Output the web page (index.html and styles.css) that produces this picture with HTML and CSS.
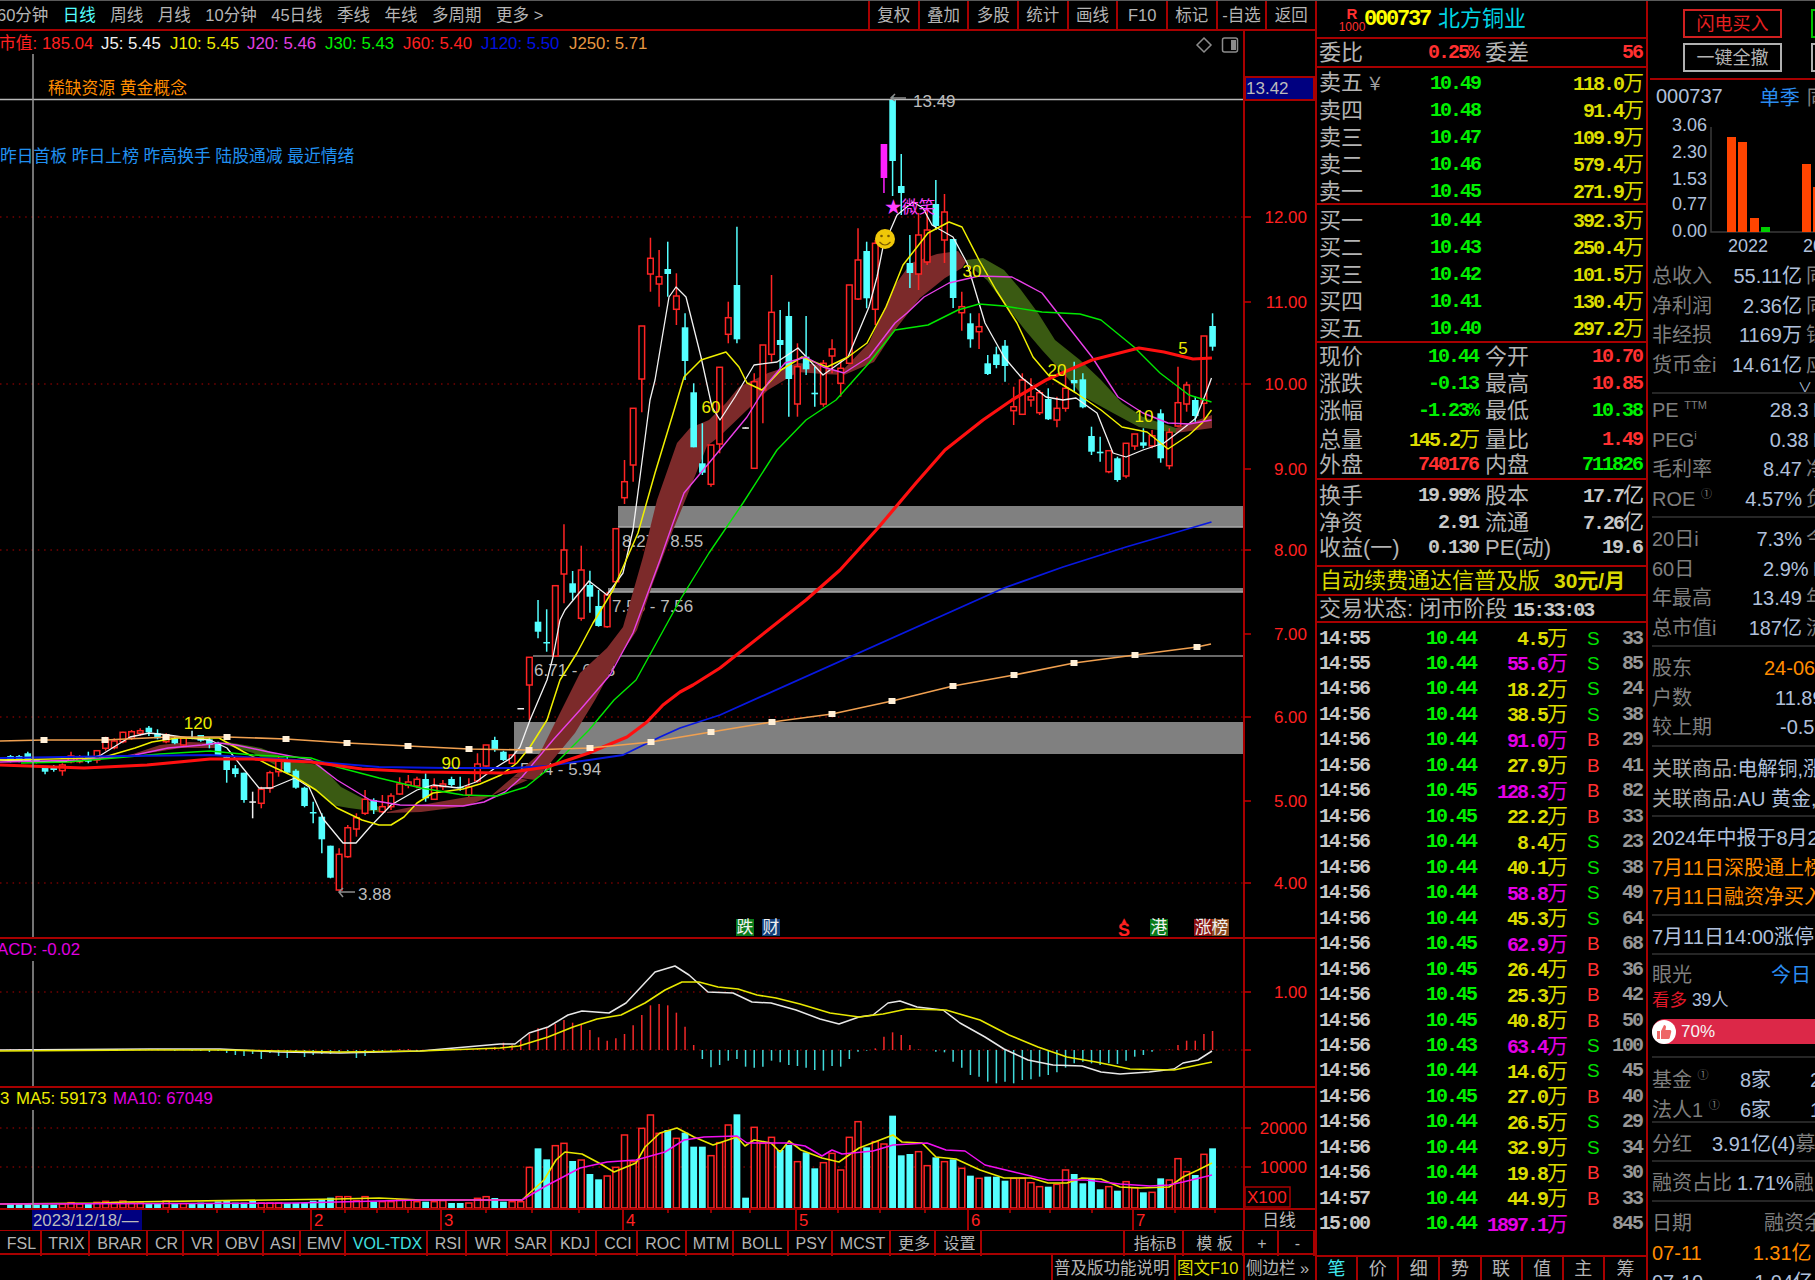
FILE: index.html
```html
<!DOCTYPE html>
<html lang="zh-CN">
<head>
<meta charset="utf-8">
<title>北方铜业 000737</title>
<link rel="stylesheet" href="styles.css">
</head>
<body>
<div class="app">
  <section class="left">
    <header class="topbar">
      <nav class="periods">
        <span>60分钟</span><span class="on">日线</span><span>周线</span><span>月线</span><span>10分钟</span><span>45日线</span><span>季线</span><span>年线</span><span>多周期</span><span>更多 &gt;</span>
      </nav>
      <nav class="tools">
        <span>复权</span><span>叠加</span><span>多股</span><span>统计</span><span>画线</span><span>F10</span><span>标记</span><span>-自选</span><span>返回</span>
      </nav>
    </header>
    <svg id="chart" class="chart" viewBox="0 31 1315 1200" width="1315" height="1200"></svg>
    <nav class="indicators">
      <span>FSL</span><span>TRIX</span><span>BRAR</span><span>CR</span><span>VR</span><span>OBV</span><span>ASI</span><span>EMV</span><span class="on">VOL-TDX</span><span>RSI</span><span>WR</span><span>SAR</span><span>KDJ</span><span>CCI</span><span>ROC</span><span>MTM</span><span>BOLL</span><span>PSY</span><span>MCST</span><span>更多</span><span>设置</span><span></span><span>指标B</span><span>模 板</span><span>+</span><span>-</span>
    </nav>
    <footer class="status">
      <span>普及版功能说明</span><span class="yel">图文F10</span><span>侧边栏 »</span>
    </footer>
  </section>

  <section class="quote">
    <div class="qhead">
      <span class="rank"><b>R</b><i>1000</i></span>
      <span class="code num">000737</span>
      <span class="name">北方铜业</span>
    </div>
    <div class="qblock qb-ratio">
      <div class="q4"><span>委比</span><span class="num red">0.25%</span><span>委差</span><span class="num red">56</span></div>
    </div>
    <div class="qblock">
      <div class="q3"><span>卖五<small>￥</small></span><span class="num grn">10.49</span><span class="num yel">118.0<em>万</em></span></div>
      <div class="q3"><span>卖四</span><span class="num grn">10.48</span><span class="num yel">91.4<em>万</em></span></div>
      <div class="q3"><span>卖三</span><span class="num grn">10.47</span><span class="num yel">109.9<em>万</em></span></div>
      <div class="q3"><span>卖二</span><span class="num grn">10.46</span><span class="num yel">579.4<em>万</em></span></div>
      <div class="q3"><span>卖一</span><span class="num grn">10.45</span><span class="num yel">271.9<em>万</em></span></div>
    </div>
    <div class="qblock qb-buy">
      <div class="q3"><span>买一</span><span class="num grn">10.44</span><span class="num yel">392.3<em>万</em></span></div>
      <div class="q3"><span>买二</span><span class="num grn">10.43</span><span class="num yel">250.4<em>万</em></span></div>
      <div class="q3"><span>买三</span><span class="num grn">10.42</span><span class="num yel">101.5<em>万</em></span></div>
      <div class="q3"><span>买四</span><span class="num grn">10.41</span><span class="num yel">130.4<em>万</em></span></div>
      <div class="q3"><span>买五</span><span class="num grn">10.40</span><span class="num yel">297.2<em>万</em></span></div>
    </div>
    <div class="qblock">
      <div class="q4"><span>现价</span><span class="num grn">10.44</span><span>今开</span><span class="num red">10.70</span></div>
      <div class="q4"><span>涨跌</span><span class="num grn">-0.13</span><span>最高</span><span class="num red">10.85</span></div>
      <div class="q4"><span>涨幅</span><span class="num grn">-1.23%</span><span>最低</span><span class="num grn">10.38</span></div>
      <div class="q4"><span>总量</span><span class="num yel">145.2<em>万</em></span><span>量比</span><span class="num red">1.49</span></div>
      <div class="q4"><span>外盘</span><span class="num red">740176</span><span>内盘</span><span class="num grn">711826</span></div>
    </div>
    <div class="qblock qb-share">
      <div class="q4"><span>换手</span><span class="num wht">19.99%</span><span>股本</span><span class="num wht">17.7<em>亿</em></span></div>
      <div class="q4"><span>净资</span><span class="num wht">2.91</span><span>流通</span><span class="num wht">7.26<em>亿</em></span></div>
      <div class="q4"><span>收益(一)</span><span class="num wht">0.130</span><span>PE(动)</span><span class="num wht">19.6</span></div>
    </div>
    <div class="qblock qad">自动续费通达信普及版<b>30元/月</b></div>
    <div class="qblock qstate">交易状态: 闭市阶段 <span class="num wht">15:33:03</span></div>
    <div class="trades">
      <div class="tr"><span class="num">14:55</span><span class="num grn">10.44</span><span class="num yel">4.5<em>万</em></span><span class="s">S</span><span class="num n">33</span></div>
      <div class="tr"><span class="num">14:55</span><span class="num grn">10.44</span><span class="num mag">55.6<em>万</em></span><span class="s">S</span><span class="num n">85</span></div>
      <div class="tr"><span class="num">14:56</span><span class="num grn">10.44</span><span class="num yel">18.2<em>万</em></span><span class="s">S</span><span class="num n">24</span></div>
      <div class="tr"><span class="num">14:56</span><span class="num grn">10.44</span><span class="num yel">38.5<em>万</em></span><span class="s">S</span><span class="num n">38</span></div>
      <div class="tr"><span class="num">14:56</span><span class="num grn">10.44</span><span class="num mag">91.0<em>万</em></span><span class="b">B</span><span class="num n">29</span></div>
      <div class="tr"><span class="num">14:56</span><span class="num grn">10.44</span><span class="num yel">27.9<em>万</em></span><span class="b">B</span><span class="num n">41</span></div>
      <div class="tr"><span class="num">14:56</span><span class="num grn">10.45</span><span class="num mag">128.3<em>万</em></span><span class="b">B</span><span class="num n">82</span></div>
      <div class="tr"><span class="num">14:56</span><span class="num grn">10.45</span><span class="num yel">22.2<em>万</em></span><span class="b">B</span><span class="num n">33</span></div>
      <div class="tr"><span class="num">14:56</span><span class="num grn">10.44</span><span class="num yel">8.4<em>万</em></span><span class="s">S</span><span class="num n">23</span></div>
      <div class="tr"><span class="num">14:56</span><span class="num grn">10.44</span><span class="num yel">40.1<em>万</em></span><span class="s">S</span><span class="num n">38</span></div>
      <div class="tr"><span class="num">14:56</span><span class="num grn">10.44</span><span class="num mag">58.8<em>万</em></span><span class="s">S</span><span class="num n">49</span></div>
      <div class="tr"><span class="num">14:56</span><span class="num grn">10.44</span><span class="num yel">45.3<em>万</em></span><span class="s">S</span><span class="num n">64</span></div>
      <div class="tr"><span class="num">14:56</span><span class="num grn">10.45</span><span class="num mag">62.9<em>万</em></span><span class="b">B</span><span class="num n">68</span></div>
      <div class="tr"><span class="num">14:56</span><span class="num grn">10.45</span><span class="num yel">26.4<em>万</em></span><span class="b">B</span><span class="num n">36</span></div>
      <div class="tr"><span class="num">14:56</span><span class="num grn">10.45</span><span class="num yel">25.3<em>万</em></span><span class="b">B</span><span class="num n">42</span></div>
      <div class="tr"><span class="num">14:56</span><span class="num grn">10.45</span><span class="num yel">40.8<em>万</em></span><span class="b">B</span><span class="num n">50</span></div>
      <div class="tr"><span class="num">14:56</span><span class="num grn">10.43</span><span class="num mag">63.4<em>万</em></span><span class="s">S</span><span class="num n">100</span></div>
      <div class="tr"><span class="num">14:56</span><span class="num grn">10.44</span><span class="num yel">14.6<em>万</em></span><span class="s">S</span><span class="num n">45</span></div>
      <div class="tr"><span class="num">14:56</span><span class="num grn">10.45</span><span class="num yel">27.0<em>万</em></span><span class="b">B</span><span class="num n">40</span></div>
      <div class="tr"><span class="num">14:56</span><span class="num grn">10.44</span><span class="num yel">26.5<em>万</em></span><span class="s">S</span><span class="num n">29</span></div>
      <div class="tr"><span class="num">14:56</span><span class="num grn">10.44</span><span class="num yel">32.9<em>万</em></span><span class="s">S</span><span class="num n">34</span></div>
      <div class="tr"><span class="num">14:56</span><span class="num grn">10.44</span><span class="num yel">19.8<em>万</em></span><span class="b">B</span><span class="num n">30</span></div>
      <div class="tr"><span class="num">14:57</span><span class="num grn">10.44</span><span class="num yel">44.9<em>万</em></span><span class="b">B</span><span class="num n">33</span></div>
      <div class="tr"><span class="num">15:00</span><span class="num grn">10.44</span><span class="num mag">1897.1<em>万</em></span><span></span><span class="num n">845</span></div>
    </div>
    <nav class="qtabs">
      <span class="on">笔</span><span>价</span><span>细</span><span>势</span><span>联</span><span>值</span><span>主</span><span>筹</span>
    </nav>
  </section>

  <aside class="side">
    <div class="actions">
      <div class="btns">
        <span class="btn buy">闪电买入</span>
        <span class="btn all">一键全撤</span>
      </div>
      <div class="btns">
        <span class="btn sell">闪电卖出</span>
        <span class="btn all">条件单</span>
      </div>
    </div>
    <div class="shead"><span class="v">000737</span><span class="blue">单季</span><span class="l">同</span></div>
    <svg class="mini" viewBox="0 0 167 148" width="167" height="148">
      <path class="mini-axis" d="M63 15V120H167"/>
      <text class="mini-t" x="59" y="19" text-anchor="end">3.06</text>
      <text class="mini-t" x="59" y="46" text-anchor="end">2.30</text>
      <text class="mini-t" x="59" y="73" text-anchor="end">1.53</text>
      <text class="mini-t" x="59" y="98" text-anchor="end">0.77</text>
      <text class="mini-t" x="59" y="125" text-anchor="end">0.00</text>
      <rect class="mini-o" x="79" y="25" width="9" height="95"/>
      <rect class="mini-o" x="90" y="30" width="9" height="90"/>
      <rect class="mini-o" x="102" y="106" width="9" height="14"/>
      <rect class="mini-g" x="113" y="115" width="9" height="5"/>
      <rect class="mini-o" x="154" y="52" width="9" height="68"/>
      <rect class="mini-o" x="165" y="75" width="9" height="45"/>
      <text class="mini-t" x="80" y="140">2022</text>
      <text class="mini-t" x="155" y="140">2023</text>
    </svg>
    <div class="sec s1">
      <div class="row"><span class="l">总收入</span><span class="v">55.11亿</span><span class="l x">同</span></div>
      <div class="row"><span class="l">净利润</span><span class="v">2.36亿</span><span class="l x">同</span></div>
      <div class="row"><span class="l">非经损</span><span class="v">1169万</span><span class="l x">钱</span></div>
      <div class="row"><span class="l">货币金i</span><span class="v">14.61亿</span><span class="l x">应</span></div>
      <div class="chev">∨</div>
    </div>
    <div class="sec s2">
      <div class="row"><span class="l">PE <sup>TTM</sup></span><span class="v">28.3</span><span class="l x">P</span></div>
      <div class="row"><span class="l">PEG<sup>i</sup></span><span class="v">0.38</span><span class="l x">P</span></div>
      <div class="row"><span class="l">毛利率</span><span class="v">8.47</span><span class="l x">净</span></div>
      <div class="row"><span class="l">ROE <sup>①</sup></span><span class="v">4.57%</span><span class="l x">负</span></div>
    </div>
    <div class="sec s3">
      <div class="row"><span class="l">20日i</span><span class="v">7.3%</span><span class="l x">今</span></div>
      <div class="row"><span class="l">60日</span><span class="v">2.9%</span><span class="l x">B</span></div>
      <div class="row"><span class="l">年最高</span><span class="v">13.49</span><span class="l x">年</span></div>
      <div class="row"><span class="l">总市值i</span><span class="v">187亿</span><span class="l x">流</span></div>
    </div>
    <div class="sec s4">
      <div class="row free"><span class="l">股东</span><span class="org w1">24-06-30</span></div>
      <div class="row free"><span class="l">户数</span><span class="vv w2">11.89万</span></div>
      <div class="row free"><span class="l">较上期</span><span class="vv w3">-0.55%</span></div>
    </div>
    <div class="sec s5">
      <div class="line g">关联商品:<span class="vv">电解铜,涨价</span></div>
      <div class="line g">关联商品:<span class="vv">AU 黄金,</span></div>
    </div>
    <div class="sec s6">
      <div class="line vv">2024年中报于8月23日</div>
      <div class="line org">7月11日深股通上榜</div>
      <div class="line org">7月11日融资净买入</div>
    </div>
    <div class="sec s7">
      <div class="line vv">7月11日14:00涨停</div>
    </div>
    <div class="sec s8">
      <div class="row free short"><span class="l">眼光</span><span class="blue today">今日</span></div>
      <div class="bull"><span class="red2">看多</span> <span class="vv">39人</span></div>
      <div class="pct">
        <svg class="thumb" viewBox="0 0 24 24" width="24" height="24"><circle cx="12" cy="12" r="12" fill="#fff"/><path fill="#e66" d="M5 11h3v8H5zM9 11l3-6c1.500 0 2 1 2 2l-.500 3H18c1 0 1.500 1 1.200 2l-1.500 6c-.2.700-.7 1-1.400 1H9z"/></svg>
        <span>70%</span>
      </div>
    </div>
    <div class="sec s9">
      <div class="inst"><span class="l">基金 <sup>①</sup></span><span class="vv">8家</span><span class="vv">2.3%</span></div>
      <div class="inst"><span class="l">法人1 <sup>①</sup></span><span class="vv">6家</span><span class="vv">1.2%</span></div>
    </div>
    <div class="sec s10">
      <div class="row free"><span class="l">分红</span><span class="vv mid">3.91亿(4)</span><span class="l">募</span></div>
    </div>
    <div class="sec s11">
      <div class="row free"><span class="l">融资占比</span><span class="vv mid2">1.71%</span><span class="l">融</span></div>
    </div>
    <div class="sec s12">
      <div class="row free"><span class="l">日期</span><span class="l rz">融资余额</span></div>
      <div class="row free dt"><span class="org">07-11</span><span class="org rz2">1.31亿</span></div>
      <div class="row free dt"><span class="vv">07-10</span><span class="vv rz2">1.04亿</span></div>
    </div>
  </aside>
</div>
<script src="chart.js"></script>
</body>
</html>
```

FILE: styles.css
```css
* { box-sizing: border-box; }
html, body { margin: 0; padding: 0; background: #000; overflow: hidden; }
body { font-family: "Liberation Sans", "Noto Sans CJK SC", sans-serif; color: #b4b4b4; }
.app { display: grid; grid-template-columns: 1315px 333px 167px; width: 1815px; height: 1280px; overflow: hidden; border-top: 1px solid #5a5a5a; }
em, i { font-style: normal; }

/* left column */
.left { display: flex; flex-direction: column; min-width: 0; }
.topbar { height: 30px; display: flex; justify-content: space-between; border-bottom: 2px solid #a80000; font-size: 16.500px; color: #b4b4b4; }
.periods { display: flex; gap: 14.500px; margin-left: -3px; line-height: 29px; }
.periods .on { color: #54ffff; }
.tools { display: flex; width: 447px; line-height: 29px; }
.tools span { flex: 1; text-align: center; border-left: 2px solid #a80000; }
.chart { display: block; flex: none; background: #000; }
.indicators { height: 24px; display: grid; grid-template-columns: 42px 48px 58px 36px 35px 45px 37px 45px 82px 39px 41px 44px 45px 41px 49px 47px 55px 44px 58px 45px 46px 143px 59px 60px 35px 36px; border-bottom: 2px solid #a80000; font-size: 16px; line-height: 25px; text-align: center; }
.indicators span { border-right: 2px solid #a80000; padding-left: 3px; white-space: nowrap; }
.indicators .on { color: #40e0e0; }
.status { height: 25px; display: flex; justify-content: flex-end; font-size: 16.500px; line-height: 27px; }
.status span { padding: 0 1px; border-left: 2px solid #a80000; white-space: nowrap; }
.status span:nth-child(1) { width: 123px; }
.status span:nth-child(2) { width: 69px; }
.status span:nth-child(3) { width: 72px; }

/* quote column */
.quote { border-left: 2px solid #a80000; border-right: 2px solid #a80000; display: flex; flex-direction: column; font-size: 22px; min-width: 0; }
.num { font-family: "Liberation Mono", monospace; font-weight: 700; font-size: 20px; letter-spacing: -2px; }
.num em { font-family: "Noto Sans CJK SC", sans-serif; font-weight: 400; font-size: 21px; letter-spacing: 0; }
.red { color: #ff3030; }
.grn { color: #00f000; }
.yel { color: #dcdc00; }
.mag { color: #e400e4; }
.wht { color: #c8c8c8; }
.qhead { height: 38px; flex: none; display: flex; align-items: center; border-bottom: 2px solid #a80000; padding-left: 23px; }
.rank { width: 24px; display: flex; flex-direction: column; align-items: center; color: #ff3030; line-height: 12px; font-size: 12px; }
.rank b { font-size: 15px; line-height: 15px; }
.code { color: #ffff00; width: 74px; font-size: 22px; letter-spacing: -2.200px; }
.name { color: #00d4e4; font-size: 22px; line-height: 1; }
.qblock { border-bottom: 2px solid #a80000; flex: none; }
.qb-ratio { height: 29px; }
.qb-buy { height: 138px; }
.qb-share { height: 87px; }
.q3, .q4 { display: grid; height: 27px; align-items: center; padding: 0 2px; line-height: 27px; white-space: nowrap; }
.q3 { grid-template-columns: 100px 61px 1fr; }
.q4 { grid-template-columns: 70px 96px 60px 1fr; }
.q3 small { color: #a0a0a0; font-size: 18px; margin-left: 3px; }
.q3 span:nth-child(2), .q3 span:nth-child(3), .q4 span:nth-child(2), .q4 span:nth-child(4) { text-align: right; }
.q4 .num:nth-child(2) { padding-right: 7px; }
.q4 .num:nth-child(2):has(em) { padding-right: 5px; }
.q4 .num:nth-child(4) { padding-right: 2px; }
.q4 .num:nth-child(4):has(em) { padding-right: 0; }
.qad { height: 29px; color: #d8d800; line-height: 28px; padding-left: 3px; white-space: nowrap; }
.qad b { margin-left: 14px; font-size: 21px; }
.qstate { height: 27px; line-height: 26px; padding-left: 2px; white-space: nowrap; }
.trades { flex: 1; min-height: 0; padding-top: 1px; }
.tr { display: grid; grid-template-columns: 60px 97px 92px 40px 1fr; height: 25.470px; line-height: 25px; padding: 0 2px; align-items: center; white-space: nowrap; }
.tr span { color: #c8c8c8; }
.tr .grn { color: #00f000; }
.tr .yel { color: #dcdc00; }
.tr .mag { color: #e400e4; }
.tr span:nth-child(2), .tr span:nth-child(3), .tr span:nth-child(5) { text-align: right; }
.tr .n { color: #969696; padding-right: 2px; }
.tr .s, .tr .b { padding-left: 19px; font-size: 19px; }
.tr .s { color: #00e000; }
.tr .b { color: #ff3030; }
.qtabs { height: 25px; flex: none; display: grid; grid-template-columns: repeat(8, 1fr); border-top: 2px solid #a80000; font-size: 18px; line-height: 24px; text-align: center; }
.qtabs span { border-right: 2px solid #a80000; }
.qtabs span:last-child { border-right: 0; }
.qtabs .on { color: #40e8f0; }

/* side column */
.side { font-size: 20px; overflow: hidden; min-width: 0; white-space: nowrap; padding-left: 4px; }
.v, .vv { color: #b0c0dc; }
.l { color: #7e7e7e; }
.org { color: #ff8c00; }
.blue { color: #2a8cf0; }
.red2 { color: #e01828; }
.actions { display: flex; gap: 29px; height: 79px; border-bottom: 2px solid #a80000; padding: 8px 0 0 33px; margin-left: -2px; width: 190px; }
.btns { display: flex; flex-direction: column; gap: 5px; flex: none; width: 99px; }
.btn { height: 29px; border: 2px solid #b0b0b0; text-align: center; font-size: 18px; line-height: 27px; }
.btn.buy { border-color: #d02020; color: #e82020; }
.btn.sell { border-color: #00c000; color: #00d000; }
.shead { display: flex; align-items: center; height: 32px; padding-left: 4px; }
.shead .blue { margin-left: 37px; }
.shead .l { margin-left: 7px; }
.mini { display: block; margin: 0 0 2px -4px; }
.mini-axis { fill: none; stroke: #3a3a3a; stroke-width: 1.500; }
.mini-t { font-size: 18px; fill: #b0c0dc; }
.mini-o { fill: #ff4400; }
.mini-g { fill: #00d000; }

.sec { border-bottom: 2px solid #262626; overflow: hidden; }
.s1 { height: 132px; }
.s2 { height: 124px; padding-top: 2px; }
.s3 { height: 129px; padding-top: 7px; }
.s4 { height: 100px; padding-top: 7px; }
.s5 { height: 70px; padding-top: 8px; }
.s6 { height: 99px; padding-top: 7px; }
.s7 { height: 39px; padding-top: 7px; }
.s8 { height: 103px; padding-top: 6px; }
.s9 { height: 65px; padding-top: 8px; }
.s10 { height: 39px; padding-top: 7px; }
.s11 { height: 40px; padding-top: 7px; }
.s12 { border-bottom: 0; padding-top: 7px; }
.row { display: flex; flex: none; height: 29.600px; line-height: 29px; width: 174px; }
.row > .v { margin-left: auto; }
.x { margin-left: 4px; flex: none; }
.free { width: auto; }
sup { font-size: 11px; vertical-align: 8px; line-height: 0; }
.w1 { margin-left: 72px; }
.w2 { margin-left: 83px; }
.w3 { margin-left: 68px; }
.chev { height: 15px; line-height: 14px; font-size: 14px; color: #b0c0dc; text-align: right; padding-right: 3px; }
.line { height: 29.600px; line-height: 29px; }
.g { color: #a8a8a8; }
.short { height: 26px; }
.today { margin-left: 79px; }
.bull { height: 26px; font-size: 17.500px; line-height: 26px; }
.pct { width: 190px; height: 25px; margin-top: 6px; background: #dc2848; border-radius: 13px; display: flex; align-items: center; color: #f4f4f4; font-size: 17px; gap: 5px; }
.thumb { display: block; flex: none; }
.inst { display: grid; grid-template-columns: 88px 70px 1fr; height: 29.600px; line-height: 29px; width: 200px; }
.mid { margin-left: 20px; }
.mid2 { margin-left: 5px; }
.rz { margin-left: 72px; }
.rz2 { margin-left: 51px; }
.dt { height: 29px; }

/* chart svg */
.gridline { stroke: #b00000; stroke-width: 1.200; stroke-dasharray: 1.500 4.800; }
.rule { stroke: #a80000; stroke-width: 2; fill: none; }
.tick { stroke: #c00000; stroke-width: 1.500; }
.cross { stroke: #9a9a9a; stroke-width: 1.500; }
.band { fill: #808080; }
.band-edge { stroke: #a8a8a8; stroke-width: 1.500; }
.band-line { stroke: #8c8c8c; stroke-width: 1.500; }
.hair { stroke: #b8b8b8; stroke-width: 1.500; }
.rb { fill: #7c2a2a; }
.rg { fill: #3a5a12; }
.bd-r { fill: #000; stroke: #ff2424; stroke-width: 1.500; }
.bd-c { fill: #54ffff; }
.bd-m { fill: #ff20ff; }
.bd-w { fill: #f0f0f0; }
.wk-r { stroke: #ff2424; stroke-width: 1.500; }
.wk-c { stroke: #54ffff; stroke-width: 1.500; }
.wk-m { stroke: #ff20ff; stroke-width: 1.500; }
.wk-w { stroke: #f0f0f0; stroke-width: 1.500; }
.ml { fill: none; stroke-linejoin: round; }
.ml-w { stroke: #f2f2f2; stroke-width: 1.300; }
.ml-y { stroke: #f0f000; stroke-width: 1.500; }
.ml-m { stroke: #e840e8; stroke-width: 1.400; }
.ml-g { stroke: #00e800; stroke-width: 1.400; }
.ml-r { stroke: #ff1010; stroke-width: 3.200; }
.ml-b { stroke: #0818e0; stroke-width: 1.800; }
.ml-o { stroke: #f0a050; stroke-width: 1.600; }
.ml-my { stroke: #e8e800; stroke-width: 1.600; }
.ml-mw { stroke: #e8e8e8; stroke-width: 1.500; }
.ml-vm { stroke: #f010f0; stroke-width: 1.500; }
.sq { fill: #fff0d8; }
.hist-r { stroke: #f02828; stroke-width: 1.500; }
.hist-c { stroke: #40d8d8; stroke-width: 1.500; }
.t { font-family: "Liberation Sans", "Noto Sans CJK SC", sans-serif; font-size: 16.800px; }
.t-lg { font-size: 17px; }
.t-sm { font-size: 8px; }
.t-b { font-weight: 700; font-size: 18px; }
.f-gray { fill: #bcbcbc; }
.f-red { fill: #ff2020; }
.f-wht { fill: #f0f0f0; }
.f-yel { fill: #ecec00; }
.f-mag { fill: #e040e0; }
.f-mac { fill: #e000e0; }
.f-grn { fill: #00f000; }
.f-blu { fill: #0010e0; }
.f-org { fill: #ff8c00; }
.f-o2 { fill: #e89840; }
.f-sky { fill: #2090f0; }
.f-star { fill: #ff40ff; }
.box-navy { fill: #000080; }
.box-price { fill: #000080; stroke: #a80000; stroke-width: 2; }
.tag-g { fill: #0a7a1a; }
.tag-b { fill: #0f3c78; }
.tag-r { fill: #8a1010; }
.tag-o { fill: #8a4a20; }
.ico { fill: none; stroke: #8c8c8c; stroke-width: 1.500; }
.ico-f { fill: #8c8c8c; }
.smile { fill: #f0c808; }
.smile-l { fill: none; stroke: #7a5a00; stroke-width: 1.200; }
.smile-e { fill: #7a5a00; }
.axis-box { fill: none; stroke: #a80000; stroke-width: 1.500; }
```

FILE: chart.js
```js
(function () {
  var out = [];
  function X(j) { return 10.5 + 8.648 * j; }
  function line(x1, y1, x2, y2, c) { out.push('<line class="' + c + '" x1="' + x1 + '" y1="' + y1 + '" x2="' + x2 + '" y2="' + y2 + '"/>'); }
  function rect(x, y, w, h, c) { out.push('<rect class="' + c + '" x="' + x + '" y="' + y + '" width="' + w + '" height="' + h + '"/>'); }
  function txt(x, y, s, c, a) { out.push('<text class="t ' + c + '" x="' + x + '" y="' + y + '"' + (a ? ' text-anchor="' + a + '"' : '') + '>' + s + '</text>'); }
  function poly(p, c) { out.push('<polyline class="ml ' + c + '" points="' + p + '"/>'); }
  function area(p, c) { out.push('<polygon class="' + c + '" points="' + p + '"/>'); }

  /* panel grid */
  [217, 384, 550, 717, 883, 992, 1050, 1128, 1167].forEach(function (y) { line(0, y, 1244, y, 'gridline'); });

  /* support/resistance bands */
  rect(618, 506, 626, 21, 'band'); line(618, 527, 1244, 527, 'band-edge');
  rect(608, 588, 636, 4, 'band'); line(608, 592, 1244, 592, 'band-edge');
  line(533, 656, 1244, 656, 'band-line');
  rect(514, 722, 730, 32, 'band');
  line(0, 99.5, 1244, 99.5, 'hair');

  txt(622, 547, '8.27 - 8.55', 't-lg f-gray');
  txt(612, 612, '7.55 - 7.56', 't-lg f-gray');
  txt(534, 676, '6.71 - 6.93', 't-lg f-gray');
  txt(520, 775, '5.94 - 5.94', 't-lg f-gray');

  /* MA ribbon */
  area('130,755 160,745 189,742 215,743 215,748 181,748 156,752', 'rb');
  area('227,742 261,748 295,762 320,765 341,787 362,798 379,807 379,812 349,808 332,805 311,787 290,773 253,753 219,743', 'rg');
  area('387,812 421,805 467,797 492,795 513,777 528,780 467,806 421,812 387,813', 'rb');
  area('513,777 540,753 563,707 580,673 607,648 623,627 643,557 657,500 677,443 690,428 709,420 726,403 739,387 768,373 798,363 823,365 840,373 869,343 895,285 911,263 937,254 958,251 966,262 962,268 945,278 920,298 895,330 874,362 844,375 823,374 798,372 768,390 747,410 720,436 707,446 687,496 673,530 653,583 637,630 624,650 613,667 595,700 575,733 547,767 535,780', 'rb');
  area('966,260 983,258 1004,270 1021,290 1038,313 1055,340 1080,360 1101,380 1122,403 1143,417 1176,428 1176,433 1139,427 1113,413 1084,397 1063,373 1042,350 1025,330 1004,303 987,280 966,263', 'rg');
  area('1176,428 1212,415 1212,428 1176,433', 'rb');

  /* candles: [type, wickTop, bodyTop, bodyBottom, wickBottom], y given in zoomed px */
  var segs = [
    [0, 680, [
      ['c',225,228,245,247],['c',225,228,245,247],['c',215,220,245,247],['c',238,240,248,250],['c',262,262,275,283],['c',255,262,270,275],['r',250,255,272,287],['r',215,228,245,250],['r',225,232,245,250],['c',215,232,245,250],
      ['r',212,212,240,250],['r',170,175,205,212],['r',175,183,203,208],['r',155,157,185,190],['r',150,155,175,180],['r',145,152,160,167],['c',138,143,157,168],['c',148,160,175,178],['r',160,165,185,190],['c',170,175,190,193],
      ['r',170,175,195,200],['c',152,172,176,178],['c',165,165,182,185],['c',172,178,195,205],['c',185,190,225,228],['c',225,230,270,308],['c',255,265,282,292],['c',278,278,360,368],['w',335,364,367,415],['r',320,328,370,385],
      ['r',272,278,325,338],['r',228,238,275,290],['c',228,245,278,282],['c',268,272,323,326],['c',320,323,378,382],['c',365,396,399,430],['c',400,410,478,520],['c',497,497,593,595],['r',505,523,630,632],['r',435,443,530,533],
      ['r',400,413,447,470],['r',330,358,400,405],['c',355,360,390,402],['r',345,380,395,400],['r',340,348,380,390],['r',292,312,342,345],['r',285,306,316,325],['r',290,298,318,325],['c',280,297,355,365],['r',295,320,358,360],
      ['r',300,312,320,330],['c',290,297,315,320],['c',290,320,323,332],['r',295,320,345,350],['r',220,252,303,308],['r',195,195,258,260],['c',170,180,210,215],['c',212,215,240,243],['r',225,225,250,252],['w',84,84,87,87]
    ]],
    [60, 400, [
      ['r',772,772,855,960],['c',600,665,695,715],['c',628,726,730,755],['r',557,557,768,768],['r',373,450,522,610],['c',513,550,578,600],['r',437,510,655,662],['c',512,555,590,638],['c',570,618,678,680],['r',575,585,680,683],['r',386,386,545,545]
    ]],
    [71, 200, [
      ['r',780,845,893,912],['r',625,625,795,845],['r',378,378,537,637],['r',113,175,222,275],['r',150,230,252,320],['c',125,207,222,290],['r',220,288,328,375],['c',340,382,483,540],['c',550,577,742,742],['c',670,790,818,825],
      ['r',735,735,853,860],['r',502,502,732,760],['r',305,353,403,430],['c',80,255,418,430],['w',682,682,685,685],['r',520,545,805,805],['r',435,435,570,670],['r',225,337,463,485],['c',330,420,435,510],['c',305,348,537,650],
      ['r',430,500,612,650],['c',348,470,508,525],['c',500,578,583,620],['r',480,490,612,620],['r',418,447,468,520],['r',480,505,550,590],['r',255,255,490,490],['r',85,180,297,300],['c',125,153,295,325],['r',120,130,328,375]
    ]],
    [101, 0, [
      ['m',144,144,178,193],['c',96,100,161,196],['c',154,186,193,215],['c',235,263,273,288],['r',213,235,274,290],['r',210,230,262,265],['c',180,204,226,230],['r',194,212,240,263],['c',239,239,298,308]
    ]],
    [110, 200, [
      ['r',275,320,338,392],['c',340,370,418,443],['r',340,380,395,447],['c',465,490,522,525],['c',440,463,495,505],['c',420,437,498,545],['r',560,620,632,675],['r',520,540,643,645],['r',535,590,600,620],['r',570,578,638,645],
      ['c',565,597,658,660],['r',590,625,660,682],['r',520,565,625,635],['c',485,540,550,575],['c',520,538,622,625],['c',680,708,755,765],['c',710,755,760,785],['r',750,752,815,820],['c',770,775,840,845],['r',730,730,828,835],
      ['r',702,702,738,750],['c',685,727,737,745],['r',690,707,738,745],['c',628,640,775,788],['r',685,697,797,808],['r',500,608,678,680],['r',545,555,612,635],['c',590,600,648,665],['r',408,408,610,655],['c',340,378,440,452]
    ]]
  ];
  segs.forEach(function (s) {
    s[2].forEach(function (d, i) {
      var x = X(s[0] + i), y = function (z) { return +(s[1] ? s[1] + z / 3 : z).toFixed(1); };
      var t = d[0], wt = y(d[1]), bt = y(d[2]), bb = y(d[3]), wb = y(d[4]);
      line(x, wt, x, wb, 'wk-' + t);
      if (t === 'r') rect(x - 2.8, bt, 5.6, Math.max(bb - bt, 1), 'bd-r');
      else rect(x - 3.3, bt, 6.6, Math.max(bb - bt, 1.5), 'bd-' + t);
    });
  });

  /* moving averages */
  poly('0,760 50,762 80,761 101,755 130,737 149,733 168,735 189,738 210,740 227,748 242,767 259,788 271,788 295,778 309,787 324,820 343,843 356,843 370,827 391,805 417,790 433,785 459,788 476,782 495,768 511,758 520,747 530,720 547,680 553,657 560,620 565,610 589,581 607,595 623,573 633,530 640,477 650,400 655,380 669,297 676,287 686,297 701,357 712,407 720,420 735,397 754,365 777,362 798,348 823,375 848,357 869,307 877,277 883,247 897,215 913,202 923,208 932,225 953,237 967,263 985,323 1004,357 1021,377 1046,397 1063,400 1076,398 1097,413 1113,453 1126,457 1143,450 1164,443 1185,427 1196,418 1206,393 1211.5,378', 'ml-w');
  poly('0,760 101,758 135,748 152,742 177,738 219,738 244,752 269,765 295,777 316,790 337,808 362,820 379,825 391,825 404,817 417,803 433,793 463,789 480,784 501,775 517,763 530,747 547,720 560,680 577,653 593,623 613,590 638,533 655,473 672,417 684,377 701,360 726,352 739,367 747,383 762,390 781,370 802,357 827,367 848,357 867,343 886,307 903,265 928,233 949,222 962,227 979,260 996,290 1017,323 1033,357 1050,377 1076,393 1101,410 1122,427 1147,432 1168,449 1189,435 1202,423 1211.5,410', 'ml-y');
  poly('0,762 84,760 135,755 168,748 202,745 219,743 236,745 269,752 311,760 337,780 370,800 400,805 463,806 484,802 505,792 522,777 553,740 580,710 610,675 633,633 660,560 673,523 684,493 709,463 747,417 768,383 785,363 806,357 823,367 844,373 869,357 895,323 907,313 924,297 949,283 979,276 1012,277 1042,293 1063,320 1092,357 1118,397 1143,413 1168,423 1189,424 1211.5,420', 'ml-m');
  poly('21,763 67,762 126,757 160,754 210,751 253,755 311,758 337,767 379,778 421,788 463,795 497,796 526,787 556,763 589,730 614,700 636,680 680,600 709,553 743,503 777,450 806,420 836,400 869,363 895,330 928,325 958,310 979,304 1004,306 1042,312 1080,314 1101,320 1134,347 1160,373 1189,395 1211.5,402', 'ml-g');
  poly('0,758 126,756 210,755 295,760 379,767 446,768 513,768 547,766 589,760 623,755 660,737 680,728 720,715 1004,588 1063,567 1126,547 1211.5,522', 'ml-b');
  poly('0,765 84,768 147,765 210,759 253,759 311,762 362,769 421,772 505,773 547,767 589,753 603,747 627,737 647,722 663,705 680,692 693,685 720,668 806,600 840,570 878,528 916,483 945,450 983,420 1012,400 1046,380 1092,360 1139,348 1164,352 1193,359 1212,358', 'ml-r');
  poly('0,741 44,740 105,740 168,737 227,737 286,739 347,743 408,746 469,749 529,750 590,748 651,742 711,732 772,722 832,714 892,701 953,686 1014,675 1074,663 1135,655 1197,647 1211,644', 'ml-o');
  [[44,740],[105,740],[166,737],[227,737],[286,739],[347,743],[408,746],[469,749],[529,750],[590,748],[651,742],[711,732],[772,722],[832,714],[892,701],[953,686],[1014,675],[1074,663],[1135,655],[1197,647]].forEach(function (p) { rect(p[0] - 3.5, p[1] - 3, 7, 6, 'sq'); });

  /* peak labels */
  line(192, 731, 192, 737, 'hair');
  txt(198, 729, '120', 't-lg f-yel', 'middle');
  txt(451, 769, '90', 't-lg f-yel', 'middle');
  txt(711, 413, '60', 't-lg f-yel', 'middle');
  txt(972, 277, '30', 't-lg f-yel', 'middle');
  txt(1057, 376, '20', 't-lg f-yel', 'middle');
  txt(1144, 422, '10', 't-lg f-yel', 'middle');
  txt(1183, 354, '5', 't-lg f-yel', 'middle');
  out.push('<path class="ico" d="M339 892H355M343 888L339 892L343 897"/>');
  txt(358, 900, '3.88', 't-lg f-gray');
  out.push('<path class="ico" d="M891 98H906M895 94L891 98L895 101"/>');
  txt(913, 107, '13.49', 't-lg f-gray');
  txt(885, 213, '★微笑', 'f-star');
  out.push('<circle class="smile" cx="885" cy="239" r="10"/><circle class="smile-e" cx="881.500" cy="236" r="1.300"/><circle class="smile-e" cx="888.500" cy="236" r="1.300"/><path class="smile-l" d="M879.500 242Q885 248 890.500 242"/>');

  /* headers over the main panel */
  txt(-1, 49, '市值:', 'f-red'); txt(42, 49, '185.04', 'f-red');
  txt(101, 49, 'J5: 5.45', 'f-wht');
  txt(170, 49, 'J10: 5.45', 'f-yel');
  txt(247, 49, 'J20: 5.46', 'f-mag');
  txt(325, 49, 'J30: 5.43', 'f-grn');
  txt(403, 49, 'J60: 5.40', 'f-red');
  txt(481, 49, 'J120: 5.50', 'f-blu');
  txt(569, 49, 'J250: 5.71', 'f-o2');
  txt(48, 94, '稀缺资源 黄金概念', 'f-org');
  txt(0, 162, '昨日首板 昨日上榜 昨高换手 陆股通减 最近情绪', 'f-sky');
  out.push('<path class="ico" d="M1204 38L1211 45L1204 52L1197 45Z"/><rect class="ico" x="1222.500" y="38" width="15" height="14" rx="2"/><rect class="ico-f" x="1231" y="40" width="5" height="10"/>');

  /* markers on the bottom of the main panel */
  rect(736, 919, 18, 17, 'tag-g'); txt(745, 933, '跌', 'f-wht', 'middle');
  rect(762, 919, 18, 17, 'tag-b'); txt(771, 933, '财', 'f-wht', 'middle');
  txt(1124, 923, '▲', 't-sm f-red', 'middle');
  txt(1124, 936, 'S', 't-b f-red', 'middle');
  rect(1150, 919, 18, 17, 'tag-g'); txt(1159, 933, '港', 'f-wht', 'middle');
  rect(1194, 919, 18, 17, 'tag-r'); rect(1212, 919, 17, 17, 'tag-o');
  txt(1211.500, 933, '涨榜', 'f-wht', 'middle');

  /* MACD */
  var histLeft = [1,1,-1,-1,0,1,1,1,-1,1,0,0,1,1,1,1,1,1,0,-1,0,-1,-1,-2,-1,-3,-5,-6,-4,-9,-3,-6,-8,-3,-7,-5,-4,-4,-2,-1,-8,-6,-3,-2,-2,1,1,-1,-1,1,1,2,1,1,1,2,3];
  histLeft.forEach(function (v, j) { line(X(j), 1050, X(j), 1050 - v, v > 0 ? 'hist-r' : 'hist-c'); });
  var hist = [368,375,360,342,325,322,312,300,308,312,330,352,362,355,342,316,285,256,252,256,278,320,375,417,442,435,422,417,440,443,440,422,427,435,438,443,450,452,438,440,417,395,392,385,350,337,345,375,388,390,395,397,425,443,465,470,485,490,485,490,480,478,470,465,457,443,430,425,430,435,430,432,422,410,405,395,390,388,375,362,362,342,333];
  hist.forEach(function (z, i) {
    var x = X(57 + i), y = 920 + z / 3;
    if (Math.abs(z - 390) > 1) line(x, 1050, x, y, z < 390 ? 'hist-r' : 'hist-c');
  });
  poly('0,1050 150,1049 220,1049 280,1052 340,1053 420,1051 500,1044 515,1044 529,1033 548,1027 568,1015 582,1011 609,1013 626,1003 641,987 655,972 675,966 689,975 708,992 733,993 752,1002 771,1003 796,1010 820,1019 839,1024 859,1017 873,1015 888,1003 900,1001 917,1007 943,1010 960,1023 985,1037 1004,1049 1028,1060 1053,1065 1082,1066 1101,1072 1120,1074 1149,1072 1174,1069 1183,1063 1198,1060 1212,1051', 'ml-mw');
  poly('0,1051 150,1050 220,1050 280,1051 340,1052 420,1051 500,1048 519,1046 548,1037 573,1027 597,1019 621,1015 645,1003 665,990 682,982 699,982 718,987 738,989 757,995 776,998 800,1004 830,1013 859,1017 883,1014 907,1009 946,1010 980,1020 1009,1035 1038,1047 1067,1057 1096,1062 1130,1069 1174,1070 1212,1062', 'ml-my');
  txt(-17, 955, 'MACD: -0.02', 'f-mac');

  /* volume */
  var volLeft = [132,132,132,134,134,134,132,128,132,132,127,124,127,123,129,129,129,129,123,129,131,130,128,130,124,122,128,128,122,129,129,129,129,129,129,122,118,113,110,110,122,110,125,125,125,120,120,125,125,125,122,129,129,129,115,110,114];
  function volType(j) {
    var c = 'r';
    segs.forEach(function (s) { if (j >= s[0] && j < s[0] + s[2].length) c = s[2][j - s[0]][0]; });
    return c === 'r' ? 'r' : 'c';
  }
  function vbar(j, top, t) {
    if (t === 'r') rect(X(j) - 3, top, 6, 1208 - top, 'bd-r');
    else rect(X(j) - 3.4, top, 6.8, 1208.500 - top, 'bd-c');
  }
  volLeft.forEach(function (z, j) { vbar(j, 1160 + z / 3, volType(j)); });
  var vol = 'c845 r845 r845 r742 c685 c718 r677 r670 c723 r720 c762 c778 r768 r742 r645 r725 r625 r585 r640 c630 r655 c638 c680 c680 r707 r668 r615 c583 c833 r622 r670 r652 c690 c675 r725 c697 c745 r728 r700 r750 r652 r605 c682 r665 r672 c587 c706 c702 r695 r737 c712 r725 c718 r745 c767 r775 c770 c770 c782 r775 r775 r788 r800 c800 r793 r750 c762 c790 c775 c808 r800 c812 r785 r803 c817 r817 c775 r780 r716 r755 c765 r703 c685'.split(' ');
  vol.forEach(function (v, i) { vbar(57 + i, 920 + (+v.slice(1)) / 3, v[0]); });
  poly('0,1204 101,1203 126,1202 337,1199 379,1198 421,1200 522,1200 544,1180 556,1160 565,1152 582,1154 599,1163 614,1172 636,1163 645,1147 660,1133 677,1128 694,1137 713,1145 737,1137 745,1146 754,1140 771,1143 780,1152 789,1141 801,1150 822,1158 839,1162 859,1148 893,1135 902,1142 922,1143 936,1157 956,1159 980,1170 1004,1178 1031,1178 1048,1183 1067,1183 1082,1178 1101,1179 1120,1187 1140,1188 1169,1187 1183,1177 1198,1170 1212,1163', 'ml-my');
  poly('0,1204 295,1203 421,1200 522,1200 544,1187 563,1177 580,1168 607,1162 636,1160 665,1152 684,1140 704,1137 737,1136 747,1143 786,1143 805,1146 822,1156 832,1150 842,1154 873,1151 893,1145 927,1143 946,1150 965,1151 985,1165 1014,1172 1048,1180 1086,1180 1120,1184 1150,1186 1169,1185 1183,1182 1212,1175', 'ml-vm');
  txt(0, 1104, '3', 'f-yel');
  txt(16, 1104, 'MA5: 59173', 'f-yel');
  txt(113, 1104, 'MA10: 67049', 'f-mac');

  /* crosshair, drawn over the panels with breaks at the labels */
  line(33, 54, 33, 938, 'cross');
  line(33, 961, 33, 1086, 'cross');
  line(33, 1110, 33, 1209, 'cross');

  /* panel rules and price axis */
  line(0, 938, 1315, 938, 'rule');
  line(0, 1087, 1315, 1087, 'rule');
  line(0, 1209, 1315, 1209, 'rule');
  line(0, 1231, 1315, 1231, 'rule');
  line(1244, 31, 1244, 1231, 'rule');
  [['12.00', 217], ['11.00', 302], ['10.00', 384], ['9.00', 469], ['8.00', 550], ['7.00', 634], ['6.00', 717], ['5.00', 801], ['4.00', 883], ['1.00', 992], ['20000', 1128], ['10000', 1167]].forEach(function (a) {
    line(1244, a[1], 1251, a[1], 'tick');
    txt(1307, a[1] + 6, a[0], 't-lg f-red', 'end');
  });
  line(1244, 1050, 1251, 1050, 'tick');
  rect(1245, 77, 69, 23, 'box-price');
  txt(1246, 94, '13.42', 't-lg f-gray');
  rect(1245, 1187, 45, 20, 'axis-box');
  txt(1247, 1203, 'X100', 't-lg f-red');

  /* date axis */
  rect(32, 1210, 110, 20, 'box-navy');
  txt(33, 1226, '2023/12/18/—', 'f-gray');
  [['2', 311], ['3', 441], ['4', 623], ['5', 796], ['6', 968], ['7', 1133]].forEach(function (a) {
    line(a[1], 1209, a[1], 1231, 'rule');
    txt(a[1] + 3, 1226, a[0], 'f-red');
  });
  [168, 217, 264, 345, 377, 408, 486, 532, 579, 668, 711, 750, 838, 880, 925, 1010, 1050, 1092, 1175, 1215].forEach(function (x) { line(x, 1209, x, 1213, 'tick'); });
  txt(1279, 1226, '日线', 'f-gray', 'middle');

  document.getElementById('chart').innerHTML = out.join('');
})();
```
